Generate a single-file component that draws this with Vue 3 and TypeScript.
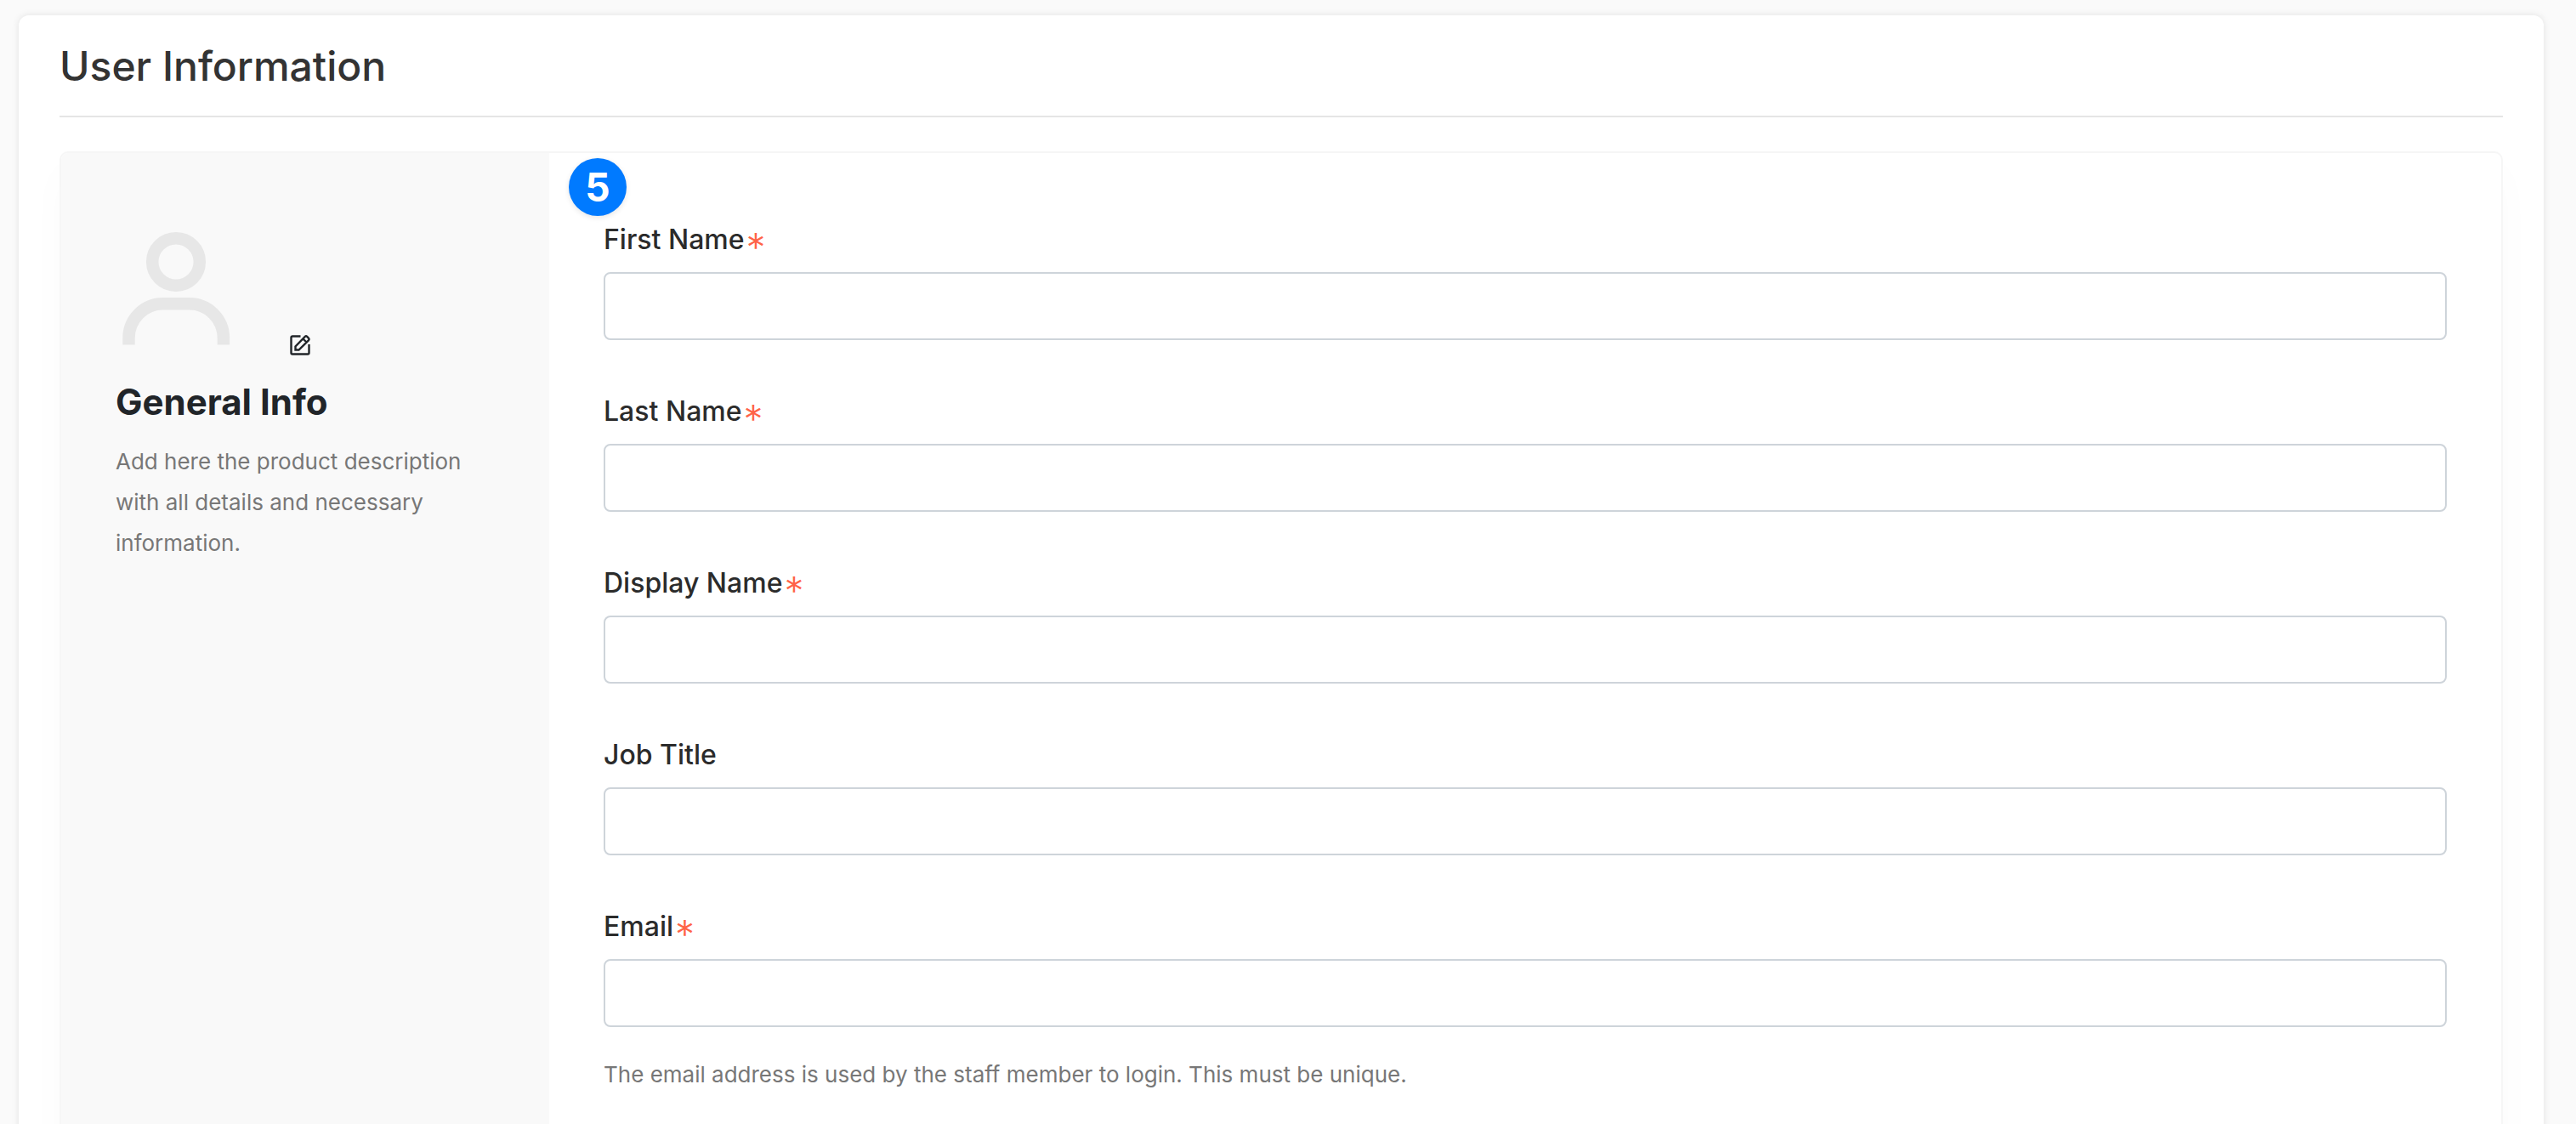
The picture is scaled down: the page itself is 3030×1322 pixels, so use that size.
<script setup lang="ts">
interface Field {
  id: string
  label: string
  type: string
  required: boolean
  help?: string
}

const fields: Field[] = [
  { id: 'first-name', label: 'First Name', type: 'text', required: true },
  { id: 'last-name', label: 'Last Name', type: 'text', required: true },
  { id: 'display-name', label: 'Display Name', type: 'text', required: true },
  { id: 'job-title', label: 'Job Title', type: 'text', required: false },
  {
    id: 'email',
    label: 'Email',
    type: 'email',
    required: true,
    help: 'The email address is used by the staff member to login. This must be unique.',
  },
]
</script>

<template>
  <main class="page">
    <section class="card">
      <h1 class="title">User Information</h1>
      <div class="panel">
        <aside class="side">
          <div class="avatar">
            <svg class="person" viewBox="0 0 146 146" aria-hidden="true">
              <circle cx="71" cy="36" r="27.800" />
              <path d="M15.500 133.500v-8a40.200 40.200 0 0 1 40.200-40.200h31a40.200 40.200 0 0 1 40.200 40.200v8" />
            </svg>
            <button class="edit" type="button" aria-label="Edit picture">
              <svg viewBox="0 0 24 24" aria-hidden="true">
                <path d="M12.500 1.500H3A1.500 1.500 0 0 0 1.500 3v18A1.500 1.500 0 0 0 3 22.500h18a1.500 1.500 0 0 0 1.500-1.500V11" />
                <path d="M6.500 17.500v-4L17.800 1.900a1.800 1.800 0 0 1 2.400 0l1.900 1.900a1.800 1.800 0 0 1 0 2.400L10.500 17.500zM15.500 4.500l4 4" />
              </svg>
            </button>
          </div>
          <h2 class="subtitle">General Info</h2>
          <p class="note">Add here the product description with all details and necessary information.</p>
        </aside>
        <form class="form">
          <span class="badge">5</span>
          <div v-for="field in fields" :key="field.id" class="field">
            <label class="label" :for="field.id">
              {{ field.label }}<span v-if="field.required" class="star">*</span>
            </label>
            <input :id="field.id" class="input" :type="field.type" :required="field.required" />
            <p v-if="field.help" class="note">{{ field.help }}</p>
          </div>
        </form>
      </div>
    </section>
  </main>
</template>

<style>
body {
  margin: 0;
  background: #fafafa;
}
</style>

<style scoped>
.page {
  box-sizing: border-box;
  height: 100vh;
  overflow: hidden;
  padding: 18px 38px 0 22px;
  font-family: Inter, "Liberation Sans", sans-serif;
}

.card {
  padding: 24px 48px 48px;
  border-radius: 12px;
  background: #fff;
  box-shadow: 0 0 8px rgba(0, 0, 0, 0.1);
}

.title {
  margin: 0 0 40px;
  padding-bottom: 22px;
  border-bottom: 2px solid #e5e5e5;
  color: #333;
  font-size: 48px;
  font-weight: 500;
  line-height: 72px;
}

.panel {
  display: flex;
  border: 2px solid #f6f6f6;
  border-radius: 10px;
  box-shadow: 0 20px 50px rgba(0, 0, 0, 0.02);
}

.side {
  box-sizing: border-box;
  flex: none;
  width: 574px;
  padding: 92px 64px;
  border-radius: 8px 0 0 8px;
  background: #f9f9f9;
}

.avatar {
  display: flex;
  align-items: flex-end;
  justify-content: space-between;
  width: 229px;
  height: 146px;
}

.person {
  width: 146px;
  height: 146px;
  fill: none;
  stroke: #e7e7e7;
  stroke-width: 14.500;
}

.edit {
  display: flex;
  padding: 0;
  border: 0;
  background: none;
}

.edit svg {
  width: 24px;
  height: 24px;
  fill: none;
  stroke: #212529;
  stroke-width: 2.400;
  overflow: visible;
}

.subtitle {
  margin: 29px 0 20px;
  color: #212529;
  font-size: 42px;
  font-weight: 700;
  line-height: 52px;
}

.note {
  margin: 0;
  color: #777;
  font-size: 26px;
  line-height: 48px;
}

.form {
  position: relative;
  flex: 1;
  min-width: 0;
  padding: 78px 64px 64px;
}

.badge {
  position: absolute;
  top: 6px;
  left: 23px;
  width: 68px;
  height: 68px;
  border-radius: 50%;
  background: #007aff;
  box-shadow: 0 2px 6px rgba(0, 0, 0, 0.1);
  color: #fff;
  font-size: 46px;
  font-weight: 700;
  line-height: 68px;
  text-align: center;
}

.field {
  margin-bottom: 60px;
}

.label {
  display: flex;
  gap: 2px;
  height: 48px;
  margin-bottom: 14px;
  color: #2b2b2b;
  font-size: 32px;
  font-weight: 500;
  line-height: 48px;
}

.star {
  color: #ff6347;
  font-size: 46px;
  font-weight: 300;
  line-height: 66px;
}

.input {
  box-sizing: border-box;
  display: block;
  width: 100%;
  height: 80px;
  padding: 0 24px;
  border: 2px solid #ced4da;
  border-radius: 8px;
  background: #fff;
  color: #2b2b2b;
  font: inherit;
  font-size: 28px;
}

.input + .note {
  margin-top: 32px;
}
</style>
